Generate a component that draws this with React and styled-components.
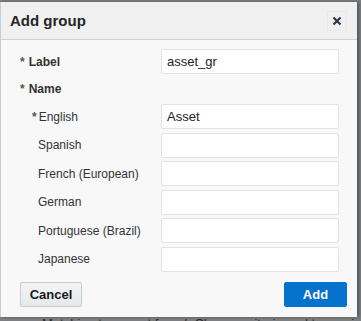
import styled, {createGlobalStyle} from 'styled-components';

const Global = createGlobalStyle`
    html, body {
        margin: 0;
        padding: 0;
        background: #7d7f80;
        font-family: 'Liberation Sans', Arial, sans-serif;
    }
`;

const Backdrop = styled.div`
    width: 361px;
    height: 321px;
    overflow: hidden;
    position: relative;
    background: #7d7f80;
    padding-top: 2px;
    box-sizing: border-box;
`;

const BehindText = styled.div`
    position: absolute;
    left: 42px;
    top: 316px;
    font-size: 13px;
    line-height: 15px;
    color: #2a2a2a;
    white-space: nowrap;
`;

const Dialog = styled.div`
    position: relative;
    width: 357px;
    height: 315px;
    box-sizing: border-box;
    background: #f8f8f8;
    border-left: 1px solid #c3ced8;
    display: flex;
    flex-direction: column;
    box-shadow: 2px 0 3px rgba(0, 0, 0, 0.35);
`;

const Header = styled.div`
    height: 38px;
    box-sizing: border-box;
    background: #f0f0f0;
    border-bottom: 1px solid #c9d3dc;
    display: flex;
    align-items: center;
    justify-content: space-between;
    padding: 0 6px 0 9px;
`;

const Title = styled.h1`
    margin: 0;
    font-size: 15px;
    font-weight: bold;
    color: #252525;
`;

const Close = styled.button`
    width: 20px;
    height: 20px;
    padding: 0;
    border: 1px solid #e9e9e9;
    border-radius: 0;
    background: transparent;
    display: flex;
    align-items: center;
    justify-content: center;
    margin-right: 4px;
`;

const Body = styled.div`
    flex: 1;
    padding: 9px 18px 0 19px;
    display: flex;
    flex-direction: column;
`;

const Row = styled.div`
    display: flex;
    align-items: center;
    justify-content: space-between;
    height: ${(p) => p.$h || 25}px;
    margin-bottom: ${(p) => (p.$gap === undefined ? 3.6 : p.$gap)}px;
`;

const Label = styled.label`
    font-size: 12px;
    color: #333;
    font-weight: ${(p) => (p.$strong ? 'bold' : 'normal')};
    padding-left: ${(p) => (p.$sub ? 12 : 0)}px;
    display: flex;
    align-items: center;
`;

const Star = styled.span`
    font-weight: bold;
    color: #555;
    margin-right: ${(p) => (p.$sub ? 2 : 4)}px;
`;

const Indent = styled.span`
    display: inline-block;
    width: 6px;
`;

const Input = styled.input`
    width: 178px;
    height: 25px;
    box-sizing: border-box;
    border: 1px solid #dfe4e8;
    border-radius: 2px;
    background: #fff;
    padding: 0 5px;
    font-family: 'Liberation Sans', Arial, sans-serif;
    font-size: 13px;
    color: #222;
    outline: none;
`;

const Footer = styled.div`
    display: flex;
    justify-content: space-between;
    align-items: center;
    padding: 0 10px 10px 19px;
`;

const Button = styled.button`
    height: 25px;
    width: ${(p) => p.$w}px;
    box-sizing: border-box;
    border-radius: 2px;
    font-family: 'Liberation Sans', Arial, sans-serif;
    font-size: 13px;
    font-weight: bold;
    padding: 0;
    border: 1px solid ${(p) => (p.$primary ? '#0572ce' : '#c4ccd4')};
    background: ${(p) =>
        p.$primary ? '#0572ce' : 'linear-gradient(#f1f3f4, #e6e9eb)'};
    color: ${(p) => (p.$primary ? '#fff' : '#1a1a1a')};
`;

const languages = [
    {name: 'English', value: 'Asset', required: true},
    {name: 'Spanish'},
    {name: 'French (European)'},
    {name: 'German'},
    {name: 'Portuguese (Brazil)'},
    {name: 'Japanese'},
];

export default function App() {
    return (
        <Backdrop>
            <Global />
            <BehindText>Matching types not found. Change criteria and try again.</BehindText>
            <Dialog>
                <Header>
                    <Title>Add group</Title>
                    <Close aria-label='Close'>
                        <svg width='10' height='10' viewBox='0 0 10 10'>
                            <path
                                d='M1.5 1.5 L8.5 8.5 M8.5 1.5 L1.5 8.5'
                                stroke='#2b3a4a'
                                strokeWidth='2.2'
                            />
                        </svg>
                    </Close>
                </Header>
                <Body>
                    <Row $gap={2}>
                        <Label $strong>
                            <Star>*</Star>Label
                        </Label>
                        <Input defaultValue='asset_gr' />
                    </Row>
                    <Row $h={26} $gap={2}>
                        <Label $strong>
                            <Star>*</Star>Name
                        </Label>
                    </Row>
                    {languages.map((l) => (
                        <Row key={l.name}>
                            <Label $sub>
                                {l.required ? <Star $sub>*</Star> : <Indent />}
                                {l.name}
                            </Label>
                            <Input defaultValue={l.value || ''} />
                        </Row>
                    ))}
                </Body>
                <Footer>
                    <Button $w={62}>Cancel</Button>
                    <Button $w={63} $primary>
                        Add
                    </Button>
                </Footer>
            </Dialog>
        </Backdrop>
    );
}
